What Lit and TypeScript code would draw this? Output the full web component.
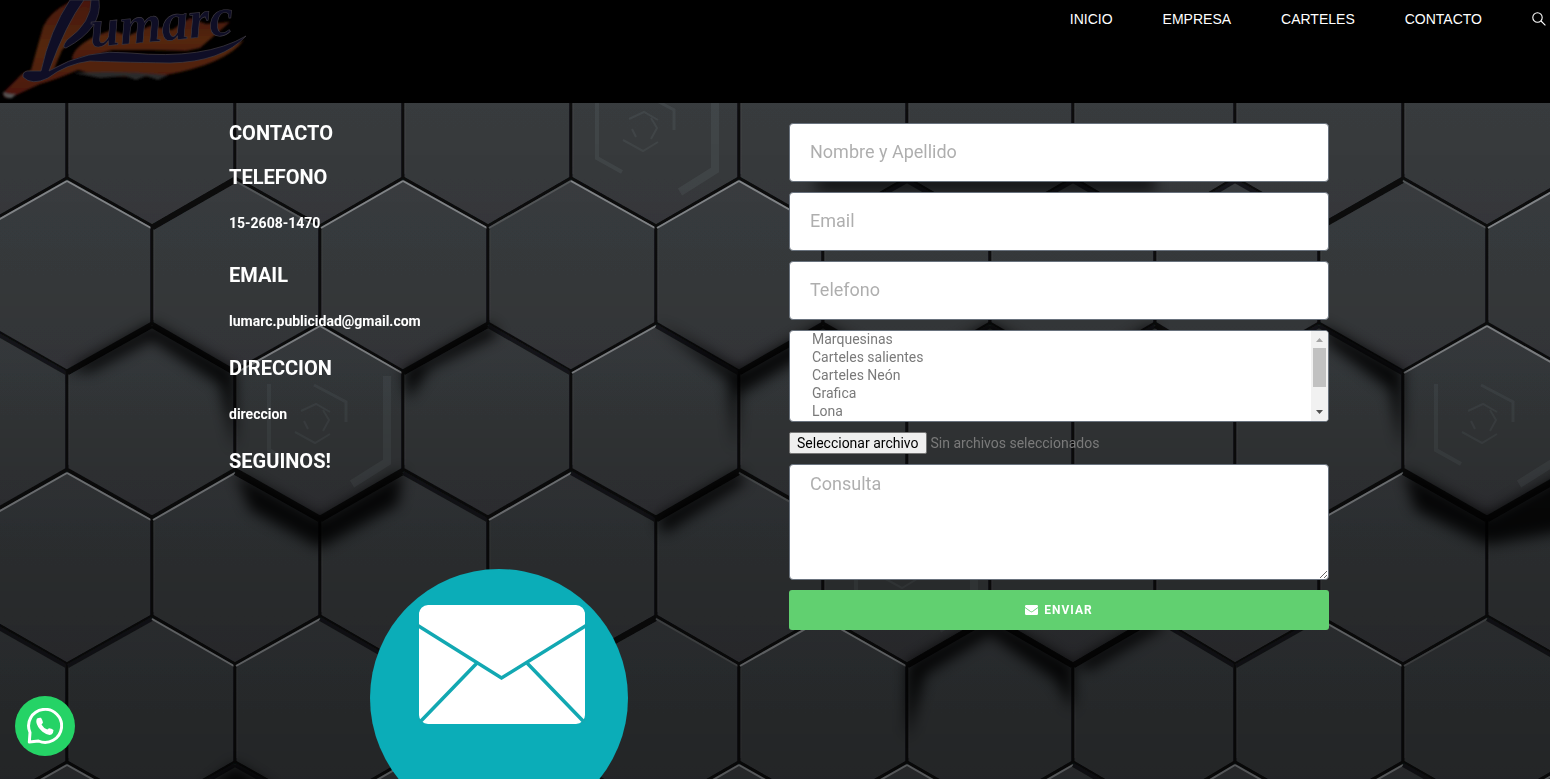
import { LitElement, html, svg, css } from "lit";
import { customElement } from "lit/decorators.js";

type Edge = "light" | "dim" | "dark" | "deep";

// Column positions of the tile centres; odd rows sit between the even ones.
const EVEN = [-101, 67, 235, 403, 571, 739, 907, 1073, 1235, 1403, 1571];
const ODD = [-17, 152, 320, 488, 656, 823, 990, 1155, 1319, 1487, 1655];

interface Row { y: number; odd: boolean; left: Edge[]; right: Edge[]; }

const code: Record<string, Edge> = { l: "light", m: "dim", d: "dark", s: "deep" };
const edges = (s: string): Edge[] => [...s].map((c) => code[c]);

// y is the top vertex of the row; one letter per tile for its two upper edges.
const ROWS: Row[] = [
  { y: 32, odd: true, left: edges("ddddddddddd"), right: edges("ddddddddddd") },
  { y: 178, odd: false, left: edges("llslmldddsl"), right: edges("llmllldddml") },
  { y: 323, odd: true, left: edges("dslslsdddll"), right: edges("dslddsdsdll") },
  { y: 470, odd: false, left: edges("lllslsddlls"), right: edges("llsddmddlsl") },
  { y: 616, odd: true, left: edges("ddldslssdml"), right: edges("dldmmlsdldl") },
  { y: 762, odd: false, left: edges("lldldllllll"), right: edges("lldldlldldl") },
];

const stroke: Record<Edge, string> = { light: "#85888b", dim: "#55585a", dark: "#17191a", deep: "#08090a" };

// Soft shadows cast by the raised tiles.
const SHADOWS = [
  "M67 370 L152 323 L235 370 L235 450 L220 385 L152 340 L90 372Z",
  "M235 472 L320 518 L403 470 L398 505 L320 548 L250 510Z",
  "M403 370 L488 323 L500 334 L430 368 L408 400Z",
  "M656 323 L739 370 L823 323 L823 345 L739 395 L735 450 L728 380Z",
  "M656 518 L739 470 L745 482 L664 534Z",
  "M1403 470 L1487 515 L1571 470 L1571 530 L1487 545 L1415 510Z",
  "M1319 323 L1403 370 L1402 450 L1390 390 L1330 345Z",
  "M907 664 L990 616 L1073 664 L1073 710 L1055 680 L990 635 L925 675 L907 740Z",
  "M1073 664 L1155 616 L1165 626 L1090 670Z",
  "M823 323 L907 370 L990 323 L1073 370 L1155 323 L1155 345 L1073 390 L990 345 L907 390 L823 345Z",
  "M810 184 L823 178 L1155 178 L1155 190 L823 190Z",
  "M190 800 L235 764 L290 800Z",
];

const EMBLEMS = [[320, 420], [648, 128], [1487, 420], [907, 565]];

@customElement("hex-backdrop")
class HexBackdrop extends LitElement {
  static styles = css`
    :host { display: block; }
    .art { display: block; width: 100%; height: 100%; }
  `;

  private tile(row: Row, i: number) {
    const xs = row.odd ? ODD : EVEN;
    const other = row.odd ? EVEN : ODD;
    const x = xs[i];
    const l = row.odd ? other[i] : other[i - 1] ?? x - 84;
    const r = row.odd ? other[i + 1] ?? x + 84 : other[i];
    const y = row.y;
    const lit = (e: Edge) => (e === "light" || e === "dim" ? 2 : 4);
    const a = row.left[i], b = row.right[i];
    return svg`
      <path d="M${x} ${y} L${r} ${y + 48} V${y + 146} L${x} ${y + 194} L${l} ${y + 146} V${y + 48}Z"
        fill="url(#face)" stroke="#0e0f10" stroke-width="3"/>
      <path d="M${l + 2} ${y + 52} V${y + 142}" stroke="#46494b" stroke-width="1" opacity=".6"/>
      <path d="M${l + 1} ${y + 50} L${x} ${y + 3}" stroke=${stroke[a]} stroke-width=${lit(a)}/>
      <path d="M${x} ${y + 3} L${r - 1} ${y + 50}" stroke=${stroke[b]} stroke-width=${lit(b)}/>`;
  }

  render() {
    return html`<svg class="art" viewBox="0 103 1550 676" preserveAspectRatio="xMinYMin slice" aria-hidden="true">
      <defs>
        <linearGradient id="face" x1="0" y1="0" x2="0" y2="1">
          <stop offset="0" stop-color="#3a3d40"/><stop offset="1" stop-color="#37393c"/>
        </linearGradient>
        <linearGradient id="fade" x1="0" y1="0" x2="0" y2="1">
          <stop offset="0" stop-color="#000" stop-opacity="0"/>
          <stop offset=".35" stop-color="#000" stop-opacity=".08"/>
          <stop offset=".65" stop-color="#000" stop-opacity=".25"/>
          <stop offset="1" stop-color="#000" stop-opacity=".36"/>
        </linearGradient>
        <filter id="soft" x="-20%" y="-40%" width="140%" height="180%"><feGaussianBlur stdDeviation="7"/></filter>
        <filter id="edge"><feGaussianBlur stdDeviation="0.7"/></filter>
      </defs>
      <rect y="103" width="1550" height="676" fill="#33373a"/>
      <g fill="none" filter="url(#edge)">${ROWS.map((row) => EVEN.map((_, i) => this.tile(row, i)))}</g>
      <g fill="#000" opacity=".85" filter="url(#soft)">${SHADOWS.map((d) => svg`<path d=${d}/>`)}</g>
      <g fill="none" stroke="#6b7478" opacity=".2">
        ${EMBLEMS.map(([x, y]) => svg`<g transform="translate(${x} ${y})">
          <path d="M-51 -36 V30 L-26 44" stroke-width="4"/>
          <path d="M67 -44 V42 L32 64" stroke-width="8"/>
          <path d="M-6 -35 L26 -18 V2" stroke-width="3"/>
          <path d="M-25 12 L-5 23 L10 14 M-19 -9 L-4 -16 L10 -8 M3 -10 L9 0 L3 11 M-12 9 L-16 1" stroke-width="2"/>
        </g>`)}
      </g>
      <rect y="103" width="1550" height="676" fill="url(#fade)"/>
    </svg>`;
  }
}

@customElement("app-root")
class AppRoot extends LitElement {
  static styles = css`
    :host { display: flex; flex-direction: column; height: 100vh; overflow: hidden; background: #232527;
      font-family: Roboto, "Liberation Sans", sans-serif; color: #fff; }
    * { box-sizing: border-box; }
    .top { display: flex; flex: none; justify-content: space-between; align-items: flex-start; height: 103px; background: #000; }
    .logo, .logo-art { display: block; }
    .nav { display: flex; align-items: center; gap: 50px; padding: 10px 4px 0 0; }
    .nav a { color: #fff; text-decoration: none; font: 14px/18px "Liberation Sans", sans-serif; }
    .search { border: 0; padding: 0; background: none; color: #fff; display: flex; }
    .page { position: relative; flex: 1; min-height: 0; padding-left: 8px; }
    .backdrop { position: absolute; inset: 0; }
    .cols { position: relative; display: grid; grid-template-columns: 1fr 1fr; gap: 20px; max-width: 1100px;
      margin: 0 auto; padding-top: 20px; }
    h2 { margin: 0; font-size: 20px; line-height: 20px; font-weight: 700; }
    .info { display: flex; flex-direction: column; }
    .info h2 + h2 { margin-top: 24px; }
    .detail { margin: 0; padding: 24px 0 25px; font-size: 14px; line-height: 24px; font-weight: 700; }
    .phone { padding-bottom: 30px; }
    .picture { align-self: center; margin-top: 98px; }
    .form { display: flex; flex-direction: column; gap: 10px; }
    .field { width: 100%; height: 59px; border: 1px solid #69727d; border-radius: 4px; background: #fff;
      padding: 6px 20px 8px; margin: 0; font: 400 18px/26px Roboto, sans-serif; color: #7a7a7a; display: block; outline: 0; }
    .field::placeholder { color: #7a7a7a; opacity: .6; }
    .area { height: 116px; resize: vertical; }
    .choice { position: relative; }
    .list { height: 92px; padding: 0 0 0 20px; font-size: 14px; line-height: 18px; overflow-y: scroll; scrollbar-width: none; }
    .list option { padding: 0 2px; min-height: 18px; line-height: 18px; }
    .bar { position: absolute; top: 1px; right: 1px; bottom: 1px; width: 17px; border-radius: 0 3px 3px 0;
      background: #f1f1f1; display: flex; flex-direction: column; align-items: center; pointer-events: none; }
    .thumb { width: 13px; flex: 1; background: #c1c1c1; margin-bottom: 17px; }
    .arrow { display: block; flex: none; }
    .file { position: relative; display: flex; align-items: center; gap: 4px; height: 22px; font-size: 14px;
      line-height: 16px; color: #7a7a7a; }
    .file input { position: absolute; inset: 0; width: 100%; opacity: 0; font-size: 0; }
    .pick { border: 1px solid #767676; border-radius: 2px; background: #efefef; color: #000; padding: 2px 7px; }
    .send { display: flex; align-items: center; justify-content: center; gap: 6px; height: 40px; border: 0;
      border-radius: 3px; background: #61d070; color: #fff; font: 700 12px/16px Roboto, sans-serif; letter-spacing: 1px; }
    .chat { position: absolute; left: 15px; bottom: 23px; width: 60px; height: 60px; border-radius: 50%;
      background: #25d366; display: flex; align-items: center; justify-content: center; }
  `;

  render() {
    return html`
      <header class="top">
        <a class="logo" href="#inicio" aria-label="Lumarc">
          <svg class="logo-art" width="250" height="103" viewBox="0 0 250 103">
            <defs>
              <linearGradient id="fire" x1="0" y1="0" x2="0" y2="1">
                <stop offset="0" stop-color="#48170b"/><stop offset=".5" stop-color="#54280e"/><stop offset="1" stop-color="#4c1610"/>
              </linearGradient>
              <filter id="haze"><feGaussianBlur stdDeviation="0.8"/></filter>
            </defs>
            <g filter="url(#haze)">
              <path d="M3 93 L22 74 L31 70 L43 27 Q50 12 66 4 L72 0 H92 Q92 24 62 50 L54 69 Q88 51 130 54 Q205 60 244 40 Q226 64 166 75 Q110 80 78 70 Q55 80 40 84 L12 97 Q3 100 3 93Z" fill="url(#fire)"/>
              <path d="M72 58 Q74 46 98 35 L112 30 L128 36 L150 26 L172 30 L190 18 L206 24 L230 22 L200 48 L186 51 L150 50 L112 50 L74 62Z" fill="url(#fire)"/>
              <path d="M12 98 Q4 99 3 92 Q9 95 16 94Z" fill="#555"/>
              <path d="M74 73 Q118 70 168 75 L158 80 L146 76 L136 80 L125 76 L100 78Z" fill="#2c2c2c"/>
            </g>
            <path d="M70 0 H99 Q103 28 66 48 Q61 48 67 40 Q92 22 91 0 H84 Q66 24 49 71 Q88 48 130 53 Q205 60 246 36 Q222 62 170 63 Q110 62 90 61 Q66 64 48 78 Q32 86 23 77 Q22 70 31 71 H41 Q50 30 70 0Z" fill="#0f0e26" stroke="#403c44" stroke-width=".7"/>
            <text x="91" y="47" transform="rotate(-5 91 47)" font-family="'Brush Script MT', 'Liberation Serif', cursive" font-style="italic" font-weight="700" font-size="54" fill="#0f0e26" stroke="#403c44" stroke-width=".6">umarc</text>
          </svg>
        </a>
        <nav class="nav">
          <a href="#inicio">INICIO</a>
          <a href="#empresa">EMPRESA</a>
          <a href="#carteles">CARTELES</a>
          <a href="#contacto">CONTACTO</a>
          <button class="search" aria-label="Buscar">
            <svg width="14" height="14" viewBox="0 0 14 14" fill="none" stroke="currentColor" stroke-width="1.1">
              <circle cx="5.5" cy="5.5" r="4.7"/><path d="M9 9 L13.4 13.4"/>
            </svg>
          </button>
        </nav>
      </header>
      <main class="page">
        <hex-backdrop class="backdrop"></hex-backdrop>
        <div class="cols">
          <section class="info">
            <h2>CONTACTO</h2>
            <h2>TELEFONO</h2>
            <p class="detail phone">15-2608-1470</p>
            <h2>EMAIL</h2>
            <p class="detail">lumarc.publicidad@gmail.com</p>
            <h2>DIRECCION</h2>
            <p class="detail">direccion</p>
            <h2>SEGUINOS!</h2>
            <svg class="picture" width="258" height="258" viewBox="0 0 258 258" aria-hidden="true">
              <circle cx="129" cy="129" r="129" fill="#0badb8"/>
              <rect x="49" y="36" width="166" height="119" rx="9" fill="#fff"/>
              <path d="M47 56 L131.5 109 L217 56 M107 94 L50 153 M157 94 L214 153" fill="none" stroke="#12a8b2" stroke-width="3.5"/>
            </svg>
          </section>
          <form class="form" @submit=${(e: Event) => e.preventDefault()}>
            <input class="field" type="text" placeholder="Nombre y Apellido" aria-label="Nombre y Apellido">
            <input class="field" type="email" placeholder="Email" aria-label="Email">
            <input class="field" type="tel" placeholder="Telefono" aria-label="Telefono">
            <div class="choice">
              <select class="field list" multiple size="5" aria-label="Producto">
                <option>Marquesinas</option>
                <option>Carteles salientes</option>
                <option>Carteles Neón</option>
                <option>Grafica</option>
                <option>Lona</option>
              </select>
              <div class="bar" aria-hidden="true">
                <svg class="arrow" width="17" height="17" viewBox="0 0 17 17"><path d="M5 11 L8.5 7 L12 11Z" fill="#a3a3a3"/></svg>
                <div class="thumb"></div>
                <svg class="arrow" width="17" height="17" viewBox="0 0 17 17"><path d="M5 6 L8.5 10 L12 6Z" fill="#505050"/></svg>
              </div>
            </div>
            <label class="file"><span class="pick">Seleccionar archivo</span><span>Sin archivos seleccionados</span><input type="file"></label>
            <textarea class="field area" placeholder="Consulta" aria-label="Consulta"></textarea>
            <button class="send" type="submit">
              <svg width="13" height="10" viewBox="0 0 13 10" aria-hidden="true">
                <rect width="13" height="10" rx="1.2" fill="#fff"/>
                <path d="M0 2.5 L5.5 6.5 Q6.5 7.2 7.5 6.5 L13 2.5" fill="none" stroke="#61d070" stroke-width=".9"/>
              </svg>
              <span>ENVIAR</span>
            </button>
          </form>
        </div>
        <a class="chat" href="#whatsapp" aria-label="WhatsApp">
          <svg width="36" height="36" viewBox="0 0 36 36" aria-hidden="true">
            <path d="M2.3 34 L3 24.5 A16.5 16.5 0 1 1 11.5 33Z" fill="none" stroke="#fff" stroke-width="3" stroke-linejoin="round"/>
            <path d="M10 10.5 Q12 9.5 14 9.8 Q15.2 11.5 16 14.5 Q15.6 15.8 14.5 16.4 Q16.5 20 20.3 21.6 L22 20.2 Q24.5 20.4 26.5 22 Q26.5 25 24.5 26.6 Q20.5 27.8 15.5 23.8 Q10 19 9.3 14 Q9.2 11.8 10 10.5Z" fill="#fff"/>
          </svg>
        </a>
      </main>`;
  }
}
